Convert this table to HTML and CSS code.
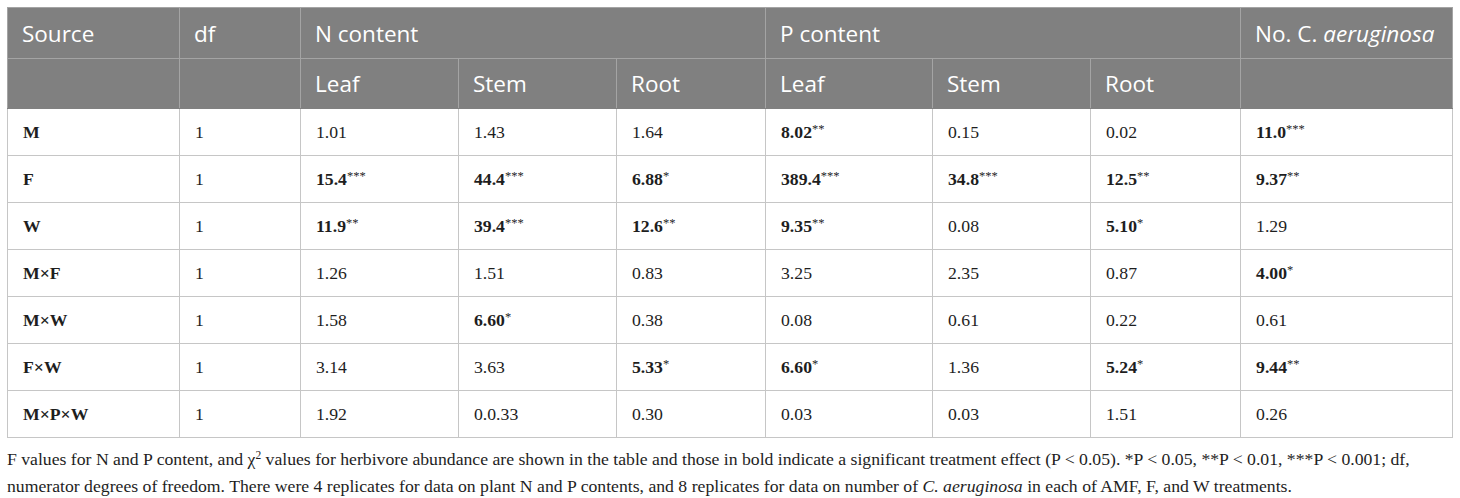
FILE: index.html
```html
<!DOCTYPE html>
<html>
<head>
<meta charset="utf-8">
<link rel="stylesheet" href="styles.css">
</head>
<body>
<div class="page">
<table class="data">
  <colgroup>
    <col class="c1"><col class="c2"><col class="c3"><col class="c4"><col class="c5"><col class="c6"><col class="c7"><col class="c8"><col class="c9">
  </colgroup>
  <thead>
    <tr class="h1">
      <th>Source</th>
      <th>df</th>
      <th colspan="3">N content</th>
      <th colspan="3">P content</th>
      <th>No. C. <i>aeruginosa</i></th>
    </tr>
    <tr class="h2">
      <th></th>
      <th></th>
      <th>Leaf</th><th>Stem</th><th>Root</th>
      <th>Leaf</th><th>Stem</th><th>Root</th>
      <th></th>
    </tr>
  </thead>
  <tbody>
    <tr>
      <td class="lbl">M</td><td>1</td><td>1.01</td><td>1.43</td><td>1.64</td>
      <td><b>8.02</b><sup>**</sup></td><td>0.15</td><td>0.02</td><td><b>11.0</b><sup>***</sup></td>
    </tr>
    <tr>
      <td class="lbl">F</td><td>1</td><td><b>15.4</b><sup>***</sup></td><td><b>44.4</b><sup>***</sup></td><td><b>6.88</b><sup>*</sup></td>
      <td><b>389.4</b><sup>***</sup></td><td><b>34.8</b><sup>***</sup></td><td><b>12.5</b><sup>**</sup></td><td><b>9.37</b><sup>**</sup></td>
    </tr>
    <tr>
      <td class="lbl">W</td><td>1</td><td><b>11.9</b><sup>**</sup></td><td><b>39.4</b><sup>***</sup></td><td><b>12.6</b><sup>**</sup></td>
      <td><b>9.35</b><sup>**</sup></td><td>0.08</td><td><b>5.10</b><sup>*</sup></td><td>1.29</td>
    </tr>
    <tr>
      <td class="lbl">M×F</td><td>1</td><td>1.26</td><td>1.51</td><td>0.83</td>
      <td>3.25</td><td>2.35</td><td>0.87</td><td><b>4.00</b><sup>*</sup></td>
    </tr>
    <tr>
      <td class="lbl">M×W</td><td>1</td><td>1.58</td><td><b>6.60</b><sup>*</sup></td><td>0.38</td>
      <td>0.08</td><td>0.61</td><td>0.22</td><td>0.61</td>
    </tr>
    <tr>
      <td class="lbl">F×W</td><td>1</td><td>3.14</td><td>3.63</td><td><b>5.33</b><sup>*</sup></td>
      <td><b>6.60</b><sup>*</sup></td><td>1.36</td><td><b>5.24</b><sup>*</sup></td><td><b>9.44</b><sup>**</sup></td>
    </tr>
    <tr>
      <td class="lbl">M×P×W</td><td>1</td><td>1.92</td><td>0.0.33</td><td>0.30</td>
      <td>0.03</td><td>0.03</td><td>1.51</td><td>0.26</td>
    </tr>
  </tbody>
</table>
<p class="note">F values for N and P content, and χ<sup class="sq">2</sup> values for herbivore abundance are shown in the table and those in bold indicate a significant treatment effect (P &lt; 0.05). *P &lt; 0.05, **P &lt; 0.01, ***P &lt; 0.001; df, numerator degrees of freedom. There were 4 replicates for data on plant N and P contents, and 8 replicates for data on number of <i>C. aeruginosa</i> in each of AMF, F, and W treatments.</p>
</div>
</body>
</html>
```

FILE: styles.css
```css
html, body {
  margin: 0;
  padding: 0;
  background: #ffffff;
}

.page {
  padding: 7px 8px 0 7px;
}

.data {
  border-collapse: collapse;
  table-layout: fixed;
  width: 1445px;
  border: 1px solid #c6c6c6;
}

.c1 { width: 172px; }
.c2 { width: 121px; }
.c3 { width: 158px; }
.c4 { width: 158px; }
.c5 { width: 149px; }
.c6 { width: 167px; }
.c7 { width: 158px; }
.c8 { width: 150px; }
.c9 { width: 212px; }

.data th {
  background: #808080;
  color: #ffffff;
  font-family: "Open Sans", "Noto Sans", sans-serif;
  font-weight: normal;
  font-size: 22.5px;
  text-align: left;
  padding: 0 0 0 14px;
  border: 1px solid #a4a4a4;
  white-space: nowrap;
}

.data .h1 th { height: 50px; }
.data .h2 th { height: 49px; border-bottom-color: #808080; }

.data td {
  font-family: "Liberation Serif", "Times New Roman", serif;
  font-size: 17.7px;
  color: #1e1e1e;
  height: 46px;
  padding: 0 0 0 15px;
  border: 1px solid #c6c6c6;
  text-align: left;
}

.data td b { font-weight: bold; }

.data td.lbl { font-weight: bold; }

.data sup {
  font-size: 12.5px;
  vertical-align: 5px;
  line-height: 0;
  font-weight: normal;
}

.note {
  margin: 8px 0 0 0;
  width: 1445px;
  font-family: "Liberation Serif", "Times New Roman", serif;
  font-size: 17.7px;
  line-height: 27px;
  color: #1e1e1e;
}

.note .sq {
  font-size: 11.5px;
  vertical-align: 6px;
  line-height: 0;
}
```
